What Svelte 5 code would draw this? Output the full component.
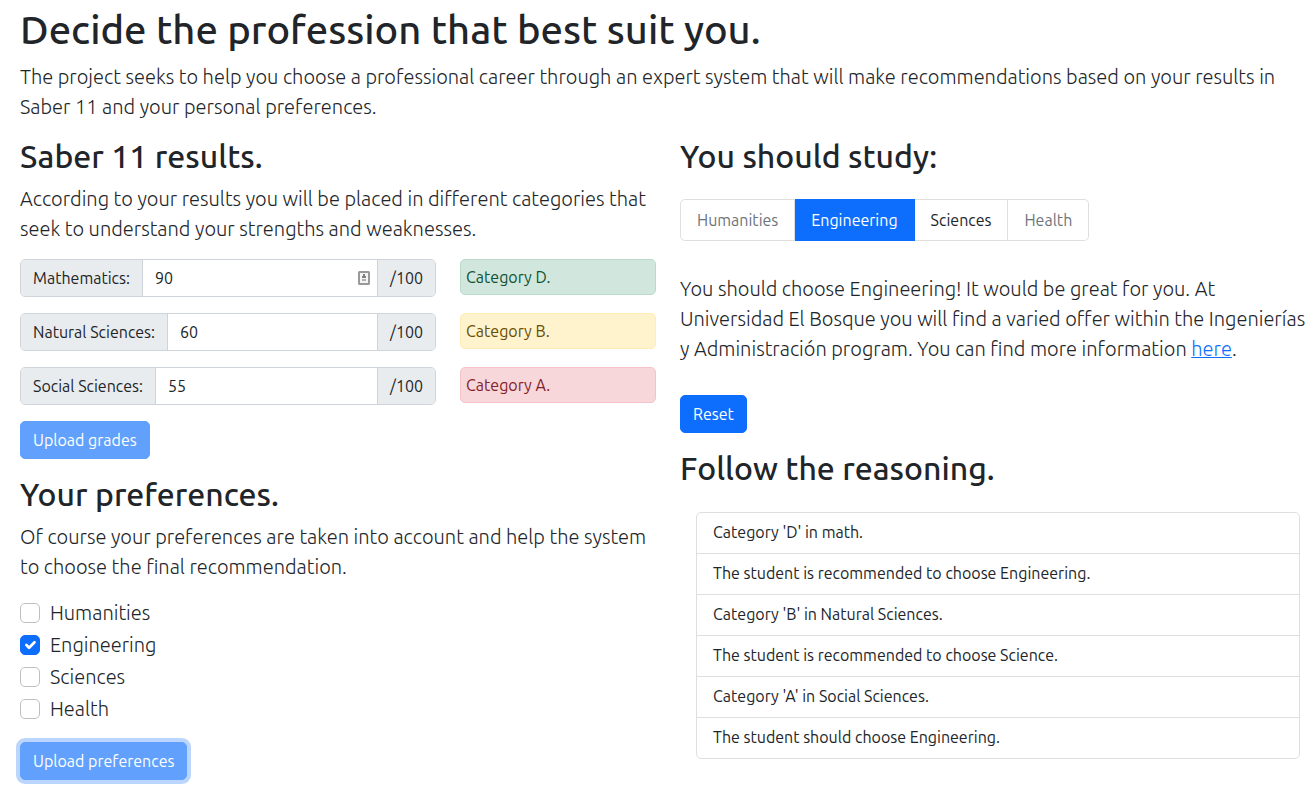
<script>
  const grades = $state([
    { id: 'math', label: 'Mathematics:', value: '90', category: 'Category D.', tone: 'success', marked: true },
    { id: 'natural', label: 'Natural Sciences:', value: '60', category: 'Category B.', tone: 'warning' },
    { id: 'social', label: 'Social Sciences:', value: '55', category: 'Category A.', tone: 'danger' }
  ]);

  const preferences = $state([
    { id: 'humanities', label: 'Humanities', checked: false },
    { id: 'engineering', label: 'Engineering', checked: true },
    { id: 'sciences', label: 'Sciences', checked: false },
    { id: 'health', label: 'Health', checked: false }
  ]);

  const areas = [
    { label: 'Humanities', disabled: true },
    { label: 'Engineering', active: true },
    { label: 'Sciences' },
    { label: 'Health', disabled: true }
  ];

  const reasoning = [
    "Category 'D' in math.",
    'The student is recommended to choose Engineering.',
    "Category 'B' in Natural Sciences.",
    'The student is recommended to choose Science.',
    "Category 'A' in Social Sciences.",
    'The student should choose Engineering.'
  ];
</script>

<main>
  <header>
    <h1>Decide the profession that best suit you.</h1>
    <p class="lead">
      The project seeks to help you choose a professional career through an expert system that will
      make recommendations based on your results in Saber 11 and your personal preferences.
    </p>
  </header>

  <div class="columns">
    <div>
      <section>
        <h2>Saber 11 results.</h2>
        <p class="lead">
          According to your results you will be placed in different categories that seek to
          understand your strengths and weaknesses.
        </p>
        {#each grades as grade (grade.id)}
          <div class="grade">
            <div class="group">
              <label class="addon" for={grade.id}>{grade.label}</label>
              <div class="field">
                <input id={grade.id} type="text" bind:value={grade.value} />
                {#if grade.marked}
                  <svg width="12" height="14" viewBox="0 0 12 14" aria-hidden="true">
                    <rect x="1" y="1" width="10" height="12" rx="0.5" fill="#f4f4f4" stroke="#999" stroke-width="2" />
                    <path d="M5 3h2v2h1v2H4V5h1z" fill="#808080" />
                    <path d="M4 8h4v2H4z" fill="#b0b0b0" />
                  </svg>
                {/if}
              </div>
              <span class="addon">/100</span>
            </div>
            <div class="alert {grade.tone}">{grade.category}</div>
          </div>
        {/each}
        <button class="btn" disabled>Upload grades</button>
      </section>

      <section class="next">
        <h2>Your preferences.</h2>
        <p class="lead">
          Of course your preferences are taken into account and help the system to choose the final
          recommendation.
        </p>
        <div class="checks">
          {#each preferences as item (item.id)}
            <label class="check">
              <input type="checkbox" bind:checked={item.checked} />
              {item.label}
            </label>
          {/each}
        </div>
        <button class="btn ring" disabled>Upload preferences</button>
      </section>
    </div>

    <div>
      <section>
        <h2>You should study:</h2>
        <div class="tabs">
          {#each areas as area}
            <button class="tab" class:active={area.active} disabled={area.disabled}>{area.label}</button>
          {/each}
        </div>
        <p class="lead advice">
          You should choose Engineering! It would be great for you. At Universidad El Bosque you
          will find a varied offer within the Ingenierías y Administración program. You can find
          more information <a href="#program">here</a>.
        </p>
        <button class="btn">Reset</button>
      </section>

      <section class="next">
        <h2>Follow the reasoning.</h2>
        <ul>
          {#each reasoning as step}
            <li>{step}</li>
          {/each}
        </ul>
      </section>
    </div>
  </div>
</main>

<style>
  :global(body) {
    margin: 0;
    background: #fff;
  }

  main {
    padding: 6px 0 14px 20px;
    color: #212529;
    font-family: Ubuntu, 'Noto Sans', sans-serif;
    font-size: 16px;
    line-height: 24px;
  }

  main :is(*, *::before, *::after) {
    box-sizing: border-box;
  }

  h1,
  h2 {
    font-weight: 550;
  }

  h1 {
    margin: 0 0 8px;
    font-size: 40px;
    line-height: 48px;
  }

  h2 {
    margin: 0 0 10px;
    font-size: 32px;
    line-height: 36px;
  }

  .lead {
    margin: 0 0 15px;
    font-size: 20px;
    font-weight: 300;
    line-height: 30px;
  }

  header {
    margin-bottom: 16px;
  }

  .columns {
    display: grid;
    grid-template-columns: 159fr 158fr;
    gap: 24px;
  }

  .next {
    margin-top: 17px;
  }

  .grade {
    display: grid;
    grid-template-columns: 104fr 49fr;
    align-items: start;
    gap: 24px;
    margin-bottom: 16px;
  }

  .group {
    display: flex;
    height: 38px;
    overflow: hidden;
    border: 1px solid #ced4da;
    border-radius: 5px;
  }

  .addon {
    padding: 6px 12px;
    background: #e9ecef;
    white-space: nowrap;
  }

  .field {
    display: flex;
    flex: 1;
    align-items: center;
    min-width: 0;
    padding: 0 7px 0 12px;
    border: solid #ced4da;
    border-width: 0 1px;
  }

  .field input {
    flex: 1;
    min-width: 0;
    padding: 0;
    border: 0;
    outline: 0;
    background: none;
    color: inherit;
    font: inherit;
  }

  .alert {
    padding: 5px;
    border: 1px solid;
    border-radius: 5px;
  }

  .success {
    border-color: #badbcc;
    background: #d1e7dd;
    color: #0f5132;
  }

  .warning {
    border-color: #ffecb5;
    background: #fff3cd;
    color: #664d03;
  }

  .danger {
    border-color: #f5c2c7;
    background: #f8d7da;
    color: #842029;
  }

  .btn {
    display: block;
    padding: 6px 12px;
    border: 1px solid #0d6efd;
    border-radius: 5px;
    background: #0d6efd;
    color: #fff;
    font: inherit;
  }

  .btn:disabled {
    opacity: 0.65;
  }

  .ring {
    box-shadow: 0 0 0 4px rgb(49 132 253 / 0.5);
  }

  .checks {
    margin-bottom: 17px;
  }

  .check {
    display: flex;
    align-items: center;
    gap: 10px;
    height: 32px;
    font-size: 20px;
    font-weight: 300;
  }

  .check input {
    width: 20px;
    height: 20px;
    margin: 0;
    appearance: none;
    border: 1px solid #bfbfbf;
    border-radius: 5px;
    background: #fff;
  }

  .check input:checked {
    border-color: #0d6efd;
    background: #0d6efd
      url("data:image/svg+xml,%3Csvg xmlns='http://www.w3.org/2000/svg' viewBox='0 0 20 20'%3E%3Cpath fill='none' stroke='%23fff' stroke-linecap='round' stroke-linejoin='round' stroke-width='3' d='m6 10 3 3 6-6'/%3E%3C/svg%3E")
      center / contain no-repeat;
  }

  .tabs {
    display: flex;
    margin: 25px 0 33px;
  }

  .tab {
    padding: 8px 16px;
    border: 1px solid #dfdfdf;
    border-left-width: 0;
    background: #fff;
    color: #212529;
    font: inherit;
  }

  .tab:first-child {
    border-left-width: 1px;
    border-radius: 5px 0 0 5px;
  }

  .tab:last-child {
    border-radius: 0 5px 5px 0;
  }

  .tab:disabled {
    color: #6c757d;
  }

  .tab.active {
    border-color: #0d6efd;
    background: #0d6efd;
    color: #fff;
  }

  .advice {
    margin-bottom: 31px;
  }

  a {
    color: #0d6efd;
    text-decoration-thickness: 1px;
  }

  ul {
    margin: 26px 12px 0 16px;
    padding: 0;
    border: 1px solid #dfdfdf;
    border-radius: 5px;
    list-style: none;
  }

  li {
    padding: 7px 16px 9px;
  }

  li + li {
    border-top: 1px solid #dfdfdf;
  }
</style>
